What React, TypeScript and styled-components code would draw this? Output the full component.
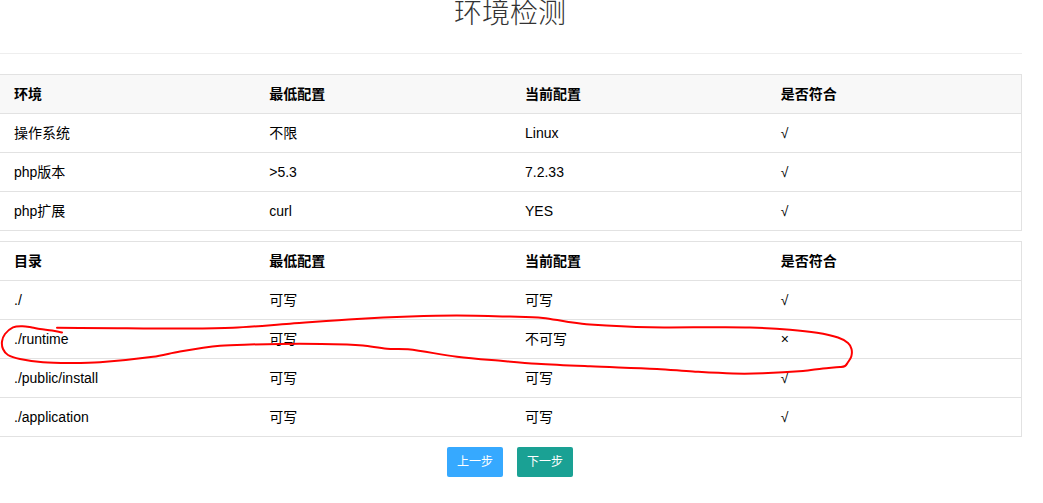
import React from "react";
import styled, { createGlobalStyle } from "styled-components";

const GlobalStyle = createGlobalStyle`
  * { box-sizing: border-box; }
  body {
    margin: 0;
    background: #fff;
    color: #000;
    font: 14px/20px "Liberation Sans", "Noto Sans CJK SC", sans-serif;
  }
`;

const Page = styled.main`
  margin: 0 21px 0 -2px;
`;

const Title = styled.h1`
  margin: 0;
  padding-bottom: 25px;
  border-bottom: 1px solid #eee;
  color: #333;
  font-size: 28px;
  font-weight: 300;
  line-height: 28px;
  text-align: center;
`;

const Tables = styled.div`
  display: flex;
  flex-direction: column;
  gap: 10px;
  padding-top: 20px;
`;

const TableWrap = styled.section`
  position: relative;
`;

const Table = styled.table`
  width: 100%;
  table-layout: fixed;
  border-collapse: collapse;
`;

const HeadRow = styled.tr<{ $shaded: boolean }>`
  background: ${(p) => (p.$shaded ? "#f8f8f8" : "#fff")};
`;

const Row = styled.tr`
  border: 1px solid #e2e2e2;
`;

const HeadCell = styled.th`
  padding: 9px 15px;
  border: solid #e2e2e2;
  border-width: 1px 0;
  font-weight: 700;
  text-align: left;

  &:first-child { border-left-width: 1px; }
  &:last-child { border-right-width: 1px; }
`;

const Cell = styled.td`
  padding: 9px 15px;
`;

const PenMark = styled.svg`
  position: absolute;
  inset: 0;
  width: 100%;
  height: 100%;
  overflow: visible;
  pointer-events: none;
`;

const Actions = styled.div`
  display: flex;
  justify-content: center;
  gap: 14px;
  padding: 10px 0 26px;
`;

const Button = styled.button<{ $color: string }>`
  height: 30px;
  padding: 0 10px;
  border: 0;
  border-radius: 2px;
  background: ${(p) => p.$color};
  color: #fff;
  font: 12px/30px "Liberation Sans", "Noto Sans CJK SC", sans-serif;
  cursor: pointer;
`;

type CheckTableProps = {
  subject: string;
  rows: string[][];
  shaded?: boolean;
  children?: React.ReactNode;
};

function CheckTable({ subject, rows, shaded = false, children }: CheckTableProps) {
  return (
    <TableWrap>
      <Table>
        <thead>
          <HeadRow $shaded={shaded}>
            {[subject, "最低配置", "当前配置", "是否符合"].map((h) => (
              <HeadCell key={h} scope="col">{h}</HeadCell>
            ))}
          </HeadRow>
        </thead>
        <tbody>
          {rows.map((row) => (
            <Row key={row[0]}>
              {row.map((value, i) => (
                <Cell key={i}>{value}</Cell>
              ))}
            </Row>
          ))}
        </tbody>
      </Table>
      {children}
    </TableWrap>
  );
}

const environment = [
  ["操作系统", "不限", "Linux", "√"],
  ["php版本", ">5.3", "7.2.33", "√"],
  ["php扩展", "curl", "YES", "√"],
];

const directories = [
  ["./", "可写", "可写", "√"],
  ["./runtime", "可写", "不可写", "×"],
  ["./public/install", "可写", "可写", "√"],
  ["./application", "可写", "可写", "√"],
];

type Point = [number, number];

/* Points along the hand-drawn loop around the failing row. */
const stroke: Point[] = [
  [62, 332.5], [52, 330.5], [40, 329], [32, 327.5], [22.5, 326.2], [13, 327.3],
  [5, 334], [2, 341.5], [3, 349], [8, 355], [20, 359], [43, 362.3], [70, 363],
  [100, 362.3], [153, 356.8], [180, 351.5], [220, 345.8], [250, 344.5], [300, 343.7],
  [347, 344.5], [363, 345.5], [387, 348.7], [408, 349.3], [457, 356.7], [503, 361],
  [537, 363.7], [590, 366.3], [657, 369], [693, 371.5], [733, 373.5], [763, 373.3],
  [803, 371], [823, 368.5], [840, 367], [845, 366], [847.5, 363], [851.3, 356.5],
  [851.5, 349], [848, 343], [838, 337.5], [817, 332.7], [790, 329.7], [750, 327.5],
  [720, 327.2], [650, 327.3], [590, 324.5], [567, 321.7], [543, 317.9], [510, 316.6],
  [457, 315.5], [410, 316.5], [357, 319], [290, 323.7], [233, 327.7], [180, 328.5],
  [127, 328.3], [57, 327.7],
];

/* Joins the points with a smooth curve that passes through each of them. */
function smoothPath(points: Point[]) {
  let d = `M${points[0].join(" ")}`;
  for (let i = 0; i < points.length - 1; i++) {
    const before = points[Math.max(i - 1, 0)];
    const from = points[i];
    const to = points[i + 1];
    const after = points[Math.min(i + 2, points.length - 1)];
    const reach = Math.hypot(to[0] - from[0], to[1] - from[1]) / 3;
    const spanA = Math.hypot(to[0] - before[0], to[1] - before[1]);
    const spanB = Math.hypot(after[0] - from[0], after[1] - from[1]);
    const c1 = [0, 1].map((k) => from[k] + ((to[k] - before[k]) / spanA) * reach);
    const c2 = [0, 1].map((k) => to[k] - ((after[k] - from[k]) / spanB) * reach);
    d += `C${c1.join(" ")} ${c2.join(" ")} ${to.join(" ")}`;
  }
  return d;
}

export default function App() {
  return (
    <>
      <GlobalStyle />
      <Page>
        <Title>环境检测</Title>
        <Tables>
          <CheckTable subject="环境" rows={environment} shaded />
          <CheckTable subject="目录" rows={directories}>
            <PenMark viewBox="-2 241 1024 196" preserveAspectRatio="none" aria-hidden="true">
              <path
                d={smoothPath(stroke)}
                fill="none"
                stroke="#f00"
                strokeWidth="2"
                strokeLinecap="round"
                strokeLinejoin="round"
                vectorEffect="non-scaling-stroke"
              />
            </PenMark>
          </CheckTable>
        </Tables>
        <Actions>
          <Button type="button" $color="#36a9ff">上一步</Button>
          <Button type="button" $color="#1aa194">下一步</Button>
        </Actions>
      </Page>
    </>
  );
}
